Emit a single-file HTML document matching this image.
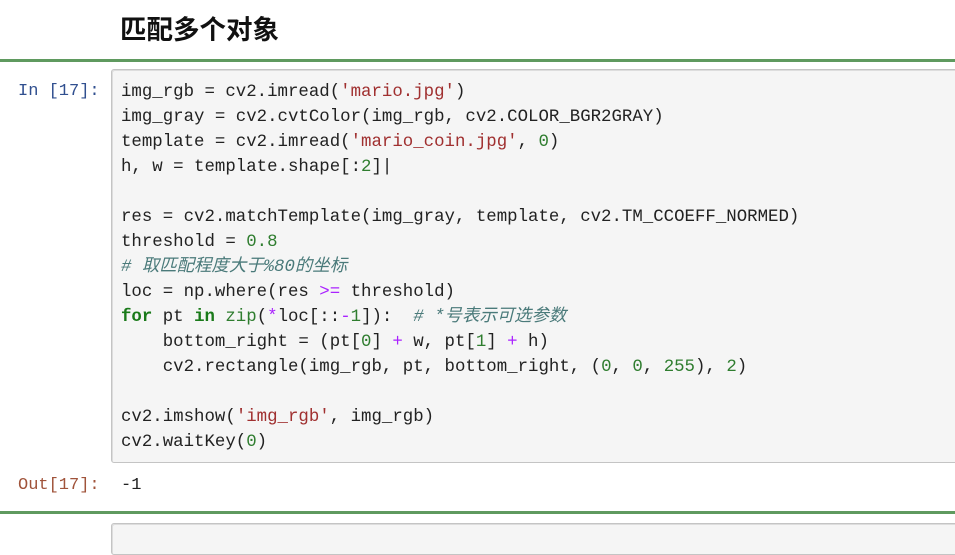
<!DOCTYPE html>
<html><head><meta charset="utf-8"><style>
body{margin:0;width:955px;height:535px;overflow:hidden;background:#fff;position:relative;font-family:"Liberation Mono","Noto Sans CJK SC",monospace;}
.h{position:absolute;left:120px;top:8px;font:bold 26.5px "Liberation Sans","Noto Sans CJK SC",sans-serif;color:#111;}
.g{position:absolute;left:0;width:955px;height:3px;background:#5f9a5f;}
.box{position:absolute;left:111px;width:860px;background:#f5f5f5;border:1px solid #c4c4c4;border-radius:3px;box-shadow:inset 1px 1px 0 #ddd;}
.code{position:absolute;left:121px;top:80px;font-size:17.4px;line-height:25px;color:#222;white-space:pre;}
.p{position:absolute;font-size:17px;}
.s{color:#a03030}.n{color:#2f7d2f}.k{color:#1a7a1a;font-weight:bold}.c{color:#4a7a7a;font-style:italic}.o{color:#aa22ff}
</style></head><body>
<div class="h">匹配多个对象</div>
<div class="g" style="top:59px"></div>
<div class="box" style="top:69px;height:392px"></div>
<div class="p" style="left:18px;top:82px;color:#304f8f">In [17]:</div>
<div class="code">img_rgb = cv2.imread(<span class="s">'mario.jpg'</span>)
img_gray = cv2.cvtColor(img_rgb, cv2.COLOR_BGR2GRAY)
template = cv2.imread(<span class="s">'mario_coin.jpg'</span>, <span class="n">0</span>)
h, w = template.shape[:<span class="n">2</span>]|

res = cv2.matchTemplate(img_gray, template, cv2.TM_CCOEFF_NORMED)
threshold = <span class="n">0.8</span>
<span class="c"># 取匹配程度大于%80的坐标</span>
loc = np.where(res <span class="o">&gt;=</span> threshold)
<span class="k">for</span> pt <span class="k">in</span> <span class="n">zip</span>(<span class="o">*</span>loc[::<span class="o">-</span><span class="n">1</span>]):  <span class="c"># *号表示可选参数</span>
    bottom_right = (pt[<span class="n">0</span>] <span class="o">+</span> w, pt[<span class="n">1</span>] <span class="o">+</span> h)
    cv2.rectangle(img_rgb, pt, bottom_right, (<span class="n">0</span>, <span class="n">0</span>, <span class="n">255</span>), <span class="n">2</span>)

cv2.imshow(<span class="s">'img_rgb'</span>, img_rgb)
cv2.waitKey(<span class="n">0</span>)</div>
<div class="p" style="left:18px;top:476px;color:#a0533a">Out[17]:</div>
<div class="p" style="left:121px;top:476px;color:#222">-1</div>
<div class="g" style="top:511px"></div>
<div class="box" style="top:523px;height:30px"></div>
</body></html>
